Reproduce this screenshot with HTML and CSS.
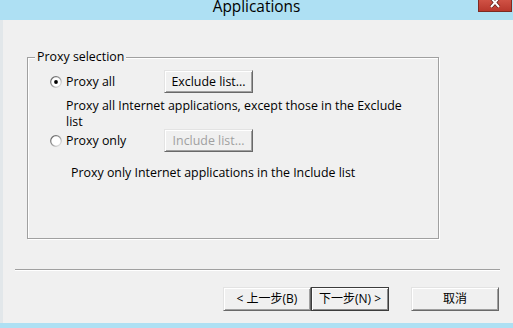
FILE: index.html
```html
<!DOCTYPE html>
<html>
<head>
<meta charset="utf-8">
<link rel="stylesheet" href="styles.css">
</head>
<body>
<div class="window">
  <div class="titlebar">
    <span class="title">Applications</span>
    <div class="close">
      <svg width="12" height="8" viewBox="0 0 12 8"><path d="M2 -2 L10 7 M10 -2 L2 7" stroke="#5a1a14" stroke-width="3.4"/><path d="M2 -2 L10 7 M10 -2 L2 7" stroke="#fff" stroke-width="2"/></svg>
    </div>
  </div>
  <div class="main">
    <div class="group">
      <span class="legend">Proxy selection</span>
      <div class="option first">
        <span class="radio"><svg width="12" height="12" viewBox="0 0 12 12"><defs><linearGradient id="rg" x1="0" y1="0" x2="1" y2="1"><stop offset="0" stop-color="#555"/><stop offset="0.5" stop-color="#9a9a9a"/><stop offset="1" stop-color="#f4f4f4"/></linearGradient></defs><circle cx="6" cy="6" r="5.3" fill="#fff" stroke="url(#rg)" stroke-width="1.2"/><circle cx="6" cy="6" r="1.9" fill="#000"/></svg></span>
        <span class="opt-label">Proxy all</span>
        <button class="btn list-btn">Exclude list...</button>
      </div>
      <p class="desc">Proxy all Internet applications, except those in the Exclude list</p>
      <div class="option second">
        <span class="radio"><svg width="12" height="12" viewBox="0 0 12 12"><circle cx="6" cy="6" r="5.3" fill="#fff" stroke="url(#rg)" stroke-width="1.2"/></svg></span>
        <span class="opt-label">Proxy only</span>
        <button class="btn list-btn disabled">Include list...</button>
      </div>
      <p class="desc desc2">Proxy only Internet applications in the Include list</p>
    </div>
    <div class="sep"></div>
    <div class="actions">
      <button class="btn wiz back">&lt; 上一步(B)</button>
      <button class="btn wiz next default">下一步(N) &gt;</button>
      <button class="btn wiz cancel">取消</button>
    </div>
  </div>
  <div class="bottombar"></div>
</div>
</body>
</html>
```
FILE: styles.css
```css
* { box-sizing: border-box; }
html, body { margin: 0; padding: 0; }
body {
  width: 513px;
  height: 328px;
  overflow: hidden;
  background: #f0f0f0;
  font-family: "Open Sans", "Noto Sans CJK SC", sans-serif;
  font-size: 12.4px;
  color: #000;
}
.window {
  display: flex;
  flex-direction: column;
  width: 513px;
  height: 328px;
}
.titlebar {
  height: 20px;
  background: #aee0f3;
  display: flex;
  justify-content: center;
  align-items: flex-start;
  position: relative;
}
.title {
  font-size: 15.4px;
  line-height: 14px;
  color: #000;
}
.close {
  position: absolute;
  right: 1px;
  top: -1px;
  width: 34px;
  height: 13px;
  background: linear-gradient(#d25447, #b9382d);
  border: 1px solid #7e2a22;
  border-top: none;
  display: flex;
  justify-content: center;
  align-items: flex-start;
}
.close svg { display: block; margin-top: 1px; }
.main {
  flex: 1;
  border-left: 3px solid #e2e7ea;
  padding-top: 37px;
  display: flex;
  flex-direction: column;
}
.group {
  position: relative;
  margin-left: 24px;
  width: 412px;
  height: 182px;
  border: 1px solid #a0a0a0;
  box-shadow: inset 1px 1px #fff, 1px 1px #fff;
  padding-left: 22px;
}
.legend {
  position: absolute;
  left: 7px;
  top: -9px;
  padding: 0 2px;
  background: #f0f0f0;
  line-height: 16px;
}
.option {
  display: flex;
  align-items: center;
  height: 23px;
}
.option.first { margin-top: 12px; }
.option.second { margin-top: -1px; }
.radio { width: 12px; height: 12px; display: block; margin-right: 4px; }
.radio svg { display: block; }
.opt-label { width: 98px; line-height: 16px; }
.desc {
  margin: 5px 0 0 16px;
  width: 350px;
  line-height: 16px;
}
.desc2 { margin: 13px 0 0 21px; }
.btn {
  font-family: "Open Sans", "Noto Sans CJK SC", sans-serif;
  font-size: 12.4px;
  color: #000;
  background: #f0f0f0;
  border: 1px solid;
  border-color: #e3e3e3 #696969 #696969 #e3e3e3;
  box-shadow: inset 1px 1px #fff, inset -1px -1px #a0a0a0;
  padding: 0;
  height: 23px;
  line-height: 20px;
  display: flex;
  justify-content: center;
  align-items: center;
}
.list-btn { width: 89px; }
.disabled { color: #a0a0a0; }
.sep {
  margin: 30px 13px 0 12px;
  height: 2px;
  border-top: 1px solid #a0a0a0;
  border-bottom: 1px solid #fff;
}
.actions {
  display: flex;
  margin-top: 16px;
  padding-left: 220px;
}
.wiz { height: 24px; font-size: 12px; }
.back { width: 88px; }
.next { width: 78px; }
.cancel { width: 88px; margin-left: 22px; }
.default {
  border: 1px solid #3c3c3c;
  box-shadow: inset 1px 1px #fff, inset -1px -1px #8a8a8a;
}
.bottombar {
  height: 5px;
  background: #aee0f3;
}
```
